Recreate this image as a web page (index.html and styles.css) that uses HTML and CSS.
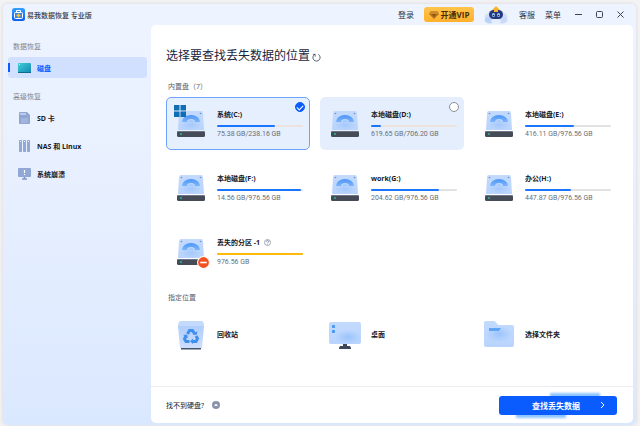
FILE: index.html
```html
<!DOCTYPE html>
<html lang="zh-CN">
<head>
    <meta charset="UTF-8">
    <meta name="viewport" content="width=device-width, initial-scale=1.0">
    <title>易我数据恢复 专业版</title>
    <link rel="stylesheet" href="styles.css">
</head>
<body>
    <!-- Iconos compartidos -->
    <svg class="sprite" aria-hidden="true">
        <defs>
            <linearGradient id="gBody" x1="0" y1="0" x2="0" y2="1">
                <stop offset="0" stop-color="#c3dafd"/>
                <stop offset="1" stop-color="#b9d4fd"/>
            </linearGradient>
            <linearGradient id="gArc" x1="0" y1="0" x2="0" y2="1">
                <stop offset="0" stop-color="#4b97f8"/>
                <stop offset="1" stop-color="#7db4fb"/>
            </linearGradient>
            <linearGradient id="gBin" x1="0" y1="0" x2="0" y2="1">
                <stop offset="0" stop-color="#a9cafc"/>
                <stop offset="1" stop-color="#cfdefc"/>
            </linearGradient>
            <linearGradient id="gLogo" x1="0" y1="0" x2="0" y2="1">
                <stop offset="0" stop-color="#35a0fb"/>
                <stop offset="1" stop-color="#0a5cf5"/>
            </linearGradient>
            <linearGradient id="gDisk" x1="0" y1="0" x2="1" y2="1">
                <stop offset="0" stop-color="#3fd0d8"/>
                <stop offset="1" stop-color="#1286b4"/>
            </linearGradient>
            <radialGradient id="gGlow">
                <stop offset="0" stop-color="#8dbcfb"/>
                <stop offset="1" stop-color="#8dbcfb" stop-opacity="0"/>
            </radialGradient>
        </defs>
        <symbol id="drive" viewBox="0 0 28 28">
            <path d="M4 1h20a2 2 0 0 1 2 2l1 17H1L2 3a2 2 0 0 1 2-2z" fill="url(#gBody)"/>
            <ellipse cx="14" cy="15" rx="11" ry="5" fill="url(#gGlow)" opacity=".5"/>
            <path d="M5 12a9 7 0 0 1 18 0h-5a4 3 0 0 0-8 0z" fill="url(#gArc)"/>
            <path d="M11.500 12a2.500 2 0 0 1 5 0z" fill="#a5cbfc"/>
            <circle cx="4.500" cy="3.500" r=".8" fill="#6d8fc4"/>
            <circle cx="23.500" cy="3.500" r=".8" fill="#6d8fc4"/>
            <rect x="0" y="21" width="28" height="6" rx="1.500" fill="#454b57"/>
            <path d="M0 22l1-1h26l1 1z" fill="#6b7585"/>
            <circle cx="4" cy="24" r=".9" fill="#22c7a0"/>
        </symbol>
    </svg>

    <div class="window">
        <header class="titlebar">
            <div class="brand">
                <svg class="logo" viewBox="0 0 13 13">
                    <rect width="13" height="13" rx="2.500" fill="url(#gLogo)"/>
                    <path d="M4.500 4V2.500h4V4" fill="none" stroke="#fff"/>
                    <rect x="2.500" y="4.500" width="8" height="6" rx="1" fill="#2f83f5" stroke="#fff"/>
                    <path d="M6.500 5.500v4M4.500 7.500h4" stroke="#ffc63a" stroke-width="1.400"/>
                </svg>
                <span>易我数据恢复 专业版</span>
            </div>
            <div class="tools">
                <button type="button" class="link">登录</button>
                <button type="button" class="vip">
                    <svg width="10" height="8" viewBox="0 0 10 8">
                        <path d="M2 0h6l2 3-5 5-5-5z" fill="#b4701a"/>
                        <path d="M2 0h6l2 3H0z" fill="#cf8a2c"/>
                        <path d="M3 3h4L5 6z" fill="#8c5312"/>
                    </svg>
                    <span>开通VIP</span>
                </button>
                <svg class="mascot" viewBox="0 0 25 18">
                    <ellipse cx="12" cy="11" rx="11.500" ry="5.500" fill="#cfe0fb"/>
                    <ellipse cx="6" cy="14" rx="5.500" ry="3.500" fill="#bcd3f8"/>
                    <ellipse cx="18" cy="14" rx="5.500" ry="3.500" fill="#c9dbf9"/>
                    <ellipse cx="12" cy="15" rx="5" ry="2.500" fill="#e4edfd"/>
                    <rect x="5" y="4" width="14" height="9" rx="4.500" fill="#26387f"/>
                    <path d="M12 0l4 4h-2v2h-4V4H8z" fill="#f7b32b"/>
                    <ellipse cx="9.500" cy="9" rx="1.500" ry="2" fill="#a3cdfb"/>
                    <ellipse cx="14.500" cy="9" rx="1.500" ry="2" fill="#a3cdfb"/>
                    <circle cx="9.500" cy="9.500" r=".8" fill="#1d2a66"/>
                    <circle cx="14.500" cy="9.500" r=".8" fill="#1d2a66"/>
                </svg>
                <button type="button" class="link">客服</button>
                <button type="button" class="link">菜单</button>
                <div class="controls">
                    <button type="button" aria-label="最小化"><svg viewBox="0 0 7 7"><path d="M0 3.500h7"/></svg></button>
                    <button type="button" aria-label="最大化"><svg viewBox="0 0 7 7"><rect x=".5" y=".5" width="6" height="6" rx="1"/></svg></button>
                    <button type="button" aria-label="关闭"><svg viewBox="0 0 7 7"><path d="M.5.5l6 6M6.500.5l-6 6"/></svg></button>
                </div>
            </div>
        </header>

        <div class="body">
            <nav class="sidebar">
                <p class="group">数据恢复</p>
                <a href="#disk" class="item active">
                    <svg viewBox="0 0 14 14">
                        <rect x="1" y="2" width="13" height="10" rx="1" fill="url(#gDisk)"/>
                        <path d="M1 11h13v1H1z" fill="#0c6b93"/>
                        <circle cx="2.500" cy="3.500" r=".6" fill="#c9fbf6"/>
                    </svg>
                    <span>磁盘</span>
                </a>
                <p class="group">高级恢复</p>
                <a href="#sd" class="item">
                    <svg viewBox="0 0 14 14">
                        <path d="M3 1h7l3 3v8a1 1 0 0 1-1 1H3a1 1 0 0 1-1-1V2a1 1 0 0 1 1-1z" fill="#8fa6d3"/>
                        <path d="M4 2v2M6 2v2M8 2v2" stroke="#e9f1ff"/>
                        <path d="M4 7h7v5H4z" fill="#a0b4dc"/>
                    </svg>
                    <span>SD 卡</span>
                </a>
                <a href="#nas" class="item">
                    <svg viewBox="0 0 14 14">
                        <rect x="2" y="1" width="3" height="12" rx=".7" fill="#91a8d5"/>
                        <rect x="6" y="1" width="3" height="12" rx=".7" fill="#91a8d5"/>
                        <rect x="10" y="1" width="3" height="12" rx=".7" fill="#91a8d5"/>
                        <path d="M3.500 2v1M7.500 2v1M11.500 2v1" stroke="#e9f1ff"/>
                    </svg>
                    <span>NAS 和 Linux</span>
                </a>
                <a href="#crash" class="item">
                    <svg viewBox="0 0 14 14">
                        <rect x="1" y="1" width="13" height="9" rx="1" fill="#91a8d5"/>
                        <path d="M7.500 3v3M7.500 7v1" stroke="#fff" stroke-width="1.200"/>
                        <path d="M5 12h5" stroke="#7f97c9" stroke-width="1.500"/>
                        <path d="M7.500 10v2" stroke="#7f97c9" stroke-width="1.500"/>
                    </svg>
                    <span>系统崩溃</span>
                </a>
            </nav>

            <main class="panel">
                <div class="content">
                    <div class="heading">
                        <h1>选择要查找丢失数据的位置</h1>
                        <button type="button" class="refresh" aria-label="刷新">
                            <svg viewBox="0 0 10 10"><path d="M3 1.500A4 4 0 1 0 7 1.500M1 1.500h2.500V4"/></svg>
                        </button>
                    </div>

                    <h2>内置盘（7）</h2>
                    <div class="grid">
                        <label class="card selected">
                            <span class="icon">
                                <svg class="drive"><use href="#drive"/></svg>
                                <svg class="win" viewBox="0 0 12 12"><path d="M0 0h5.500v5.500H0zM6.500 0H12v5.500H6.500zM0 6.500h5.500V12H0zM6.500 6.500H12V12H6.500z" fill="#0f6db4"/></svg>
                            </span>
                            <span class="info">
                                <b>系统(C:)</b>
                                <span class="bar"><i style="width: 68%"></i></span>
                                <small>75.38 GB/238.16 GB</small>
                            </span>
                            <input type="radio" name="disk" checked>
                        </label>
                        <label class="card hover">
                            <span class="icon"><svg class="drive"><use href="#drive"/></svg></span>
                            <span class="info">
                                <b>本地磁盘(D:)</b>
                                <span class="bar"><i style="width: 12%"></i></span>
                                <small>619.65 GB/706.20 GB</small>
                            </span>
                            <input type="radio" name="disk">
                        </label>
                        <label class="card">
                            <span class="icon"><svg class="drive"><use href="#drive"/></svg></span>
                            <span class="info">
                                <b>本地磁盘(E:)</b>
                                <span class="bar"><i style="width: 57%"></i></span>
                                <small>416.11 GB/976.56 GB</small>
                            </span>
                            <input type="radio" name="disk">
                        </label>
                        <label class="card">
                            <span class="icon"><svg class="drive"><use href="#drive"/></svg></span>
                            <span class="info">
                                <b>本地磁盘(F:)</b>
                                <span class="bar"><i style="width: 98%"></i></span>
                                <small>14.56 GB/976.56 GB</small>
                            </span>
                            <input type="radio" name="disk">
                        </label>
                        <label class="card">
                            <span class="icon"><svg class="drive"><use href="#drive"/></svg></span>
                            <span class="info">
                                <b>work(G:)</b>
                                <span class="bar"><i style="width: 79%"></i></span>
                                <small>204.62 GB/976.56 GB</small>
                            </span>
                            <input type="radio" name="disk">
                        </label>
                        <label class="card">
                            <span class="icon"><svg class="drive"><use href="#drive"/></svg></span>
                            <span class="info">
                                <b>办公(H:)</b>
                                <span class="bar"><i style="width: 54%"></i></span>
                                <small>447.87 GB/976.56 GB</small>
                            </span>
                            <input type="radio" name="disk">
                        </label>
                        <label class="card lost">
                            <span class="icon">
                                <svg class="drive"><use href="#drive"/></svg>
                                <svg class="minus" viewBox="0 0 12 12"><circle cx="6" cy="6" r="5.500" fill="#f4511e" stroke="#fff"/><path d="M3 6h6" stroke="#fff" stroke-width="1.500"/></svg>
                            </span>
                            <span class="info">
                                <b>丢失的分区 -1
                                    <svg class="help" viewBox="0 0 7 7"><circle cx="3.500" cy="3.500" r="3" fill="none" stroke="#7e8798" stroke-width=".7"/><path d="M2.300 2.700c0-1.500 2.400-1.500 2.400 0 0 .7-1.200.7-1.200 1.500M3.500 4.800v.7" fill="none" stroke="#5d6678" stroke-width=".7"/></svg>
                                </b>
                                <span class="bar"><i style="width: 100%"></i></span>
                                <small>976.56 GB</small>
                            </span>
                            <input type="radio" name="disk">
                        </label>
                    </div>

                    <h2 class="second">指定位置</h2>
                    <div class="grid">
                        <label class="card">
                            <span class="icon">
                                <svg class="place" viewBox="0 0 32 30">
                                    <path d="M4 2l2-1h20l2 1 1 4-2 22H5L3 6z" fill="url(#gBin)"/>
                                    <path d="M4 2l2-1h20l2 1 1 4H3z" fill="#c4dafd"/>
                                    <path d="M6 28h20v1.500H6z" fill="#46516a"/>
                                    <g fill="none" stroke="#3f8fee" stroke-width="3">
                                        <path d="M12.500 14l2-3.500h3l2 3"/>
                                        <path d="M21 16l1.500 2.500-1.500 3h-3.500"/>
                                        <path d="M14.500 21.500H11L9.500 19l1.500-3"/>
                                    </g>
                                    <path d="M17.500 14.500l4 .5 1-4zM18 18.500v5.500l-3-2.800zM8 15l4-.5 1 3.500z" fill="#3f8fee"/>
                                </svg>
                            </span>
                            <span class="info"><b>回收站</b></span>
                            <input type="radio" name="disk">
                        </label>
                        <label class="card">
                            <span class="icon">
                                <svg class="place" viewBox="0 0 32 30">
                                    <rect x="0" y="2" width="32" height="22" rx="2" fill="url(#gBody)"/>
                                    <ellipse cx="19" cy="17" rx="13" ry="7" fill="url(#gGlow)" opacity=".7"/>
                                    <rect x="3" y="5" width="3" height="3" rx=".7" fill="#4598f5"/>
                                    <rect x="3" y="10" width="3" height="3" rx=".7" fill="#4598f5"/>
                                    <path d="M14 24h4v2h3l1 2v1H10v-1l1-2h3z" fill="#3e4759"/>
                                </svg>
                            </span>
                            <span class="info"><b>桌面</b></span>
                            <input type="radio" name="disk">
                        </label>
                        <label class="card">
                            <span class="icon">
                                <svg class="place" viewBox="0 0 32 30">
                                    <path d="M1 3a2 2 0 0 1 2-2h8c2 0 3 4 5 4h13a2 2 0 0 1 2 2v18a2 2 0 0 1-2 2H3a2 2 0 0 1-2-2z" fill="url(#gBody)"/>
                                    <ellipse cx="16" cy="14" rx="13" ry="8" fill="url(#gGlow)" opacity=".7"/>
                                    <path d="M6 8h12l-2 3H6z" fill="#5ea5f8"/>
                                </svg>
                            </span>
                            <span class="info"><b>选择文件夹</b></span>
                            <input type="radio" name="disk">
                        </label>
                    </div>
                </div>

                <footer>
                    <a href="#help" class="nodisk">
                        <span>找不到硬盘?</span>
                        <svg viewBox="0 0 8 8"><circle cx="4" cy="4" r="4" fill="#8a93a9"/><path d="M2.500 4.500L4 3l1.500 1.500z" fill="#fff" stroke="#fff" stroke-width=".7"/></svg>
                    </a>
                    <div class="action">
                        <button type="button" class="scan">
                            <span>查找丢失数据</span>
                            <svg viewBox="0 0 5 8"><path d="M1 1l3 3-3 3"/></svg>
                        </button>
                    </div>
                </footer>
            </main>
        </div>
    </div>
</body>
</html>
```

FILE: styles.css
```css
* {
    box-sizing: border-box;
}

body {
    font-family: 'Open Sans', 'Noto Sans CJK SC', sans-serif;
    font-size: 7px;
    color: #15181f;
    background: #f3f3f5;
    margin: 0;
    padding: 4px 4px 1px 3px;
    display: flex;
    min-height: 100vh;
}

button {
    font-family: inherit;
    color: inherit;
    background: none;
    border: none;
    padding: 0;
    cursor: pointer;
}

a {
    color: inherit;
    text-decoration: none;
}

svg {
    display: block;
    flex: none;
}

.sprite {
    position: absolute;
    width: 0;
    height: 0;
}

.window {
    flex: 1;
    display: flex;
    flex-direction: column;
    border-radius: 5px;
    background: linear-gradient(180deg, #eef4ff 0%, #e8f0ff 40%, #dae8ff 100%);
    box-shadow: 0 0 4px rgba(0, 0, 0, 0.12);
}

/* Barra superior */
.titlebar {
    display: flex;
    justify-content: space-between;
    align-items: center;
    height: 21px;
    padding: 0 12px 0 9px;
}

.brand,
.tools,
.controls {
    display: flex;
    align-items: center;
}

.brand {
    gap: 2px;
    font-weight: 500;
    color: #343b4d;
}

.logo {
    width: 13px;
    height: 13px;
}

.tools {
    gap: 10px;
}

.link {
    font-size: 8px;
    color: #2c3345;
}

.vip {
    display: flex;
    align-items: center;
    justify-content: center;
    gap: 2px;
    width: 50px;
    height: 15px;
    font-size: 8px;
    font-weight: 700;
    color: #4d2c05;
    border-radius: 3px;
    background: linear-gradient(180deg, #ffc44c, #ffb02b);
}

.mascot {
    width: 25px;
    height: 18px;
}

.controls {
    gap: 14px;
    padding-left: 4px;
}

.controls svg {
    width: 7px;
    height: 7px;
    fill: none;
    stroke: #3c4353;
}

.body {
    flex: 1;
    display: flex;
    padding: 0 3px 2px 0;
}

/* Menu lateral */
.sidebar {
    width: 148px;
    flex: none;
    padding: 16px 4px 0 5px;
}

.group {
    margin: 13px 0 4px;
    padding-left: 5px;
    line-height: 12px;
    color: #80858f;
}

.group:first-child {
    margin-top: 0;
}

.item {
    position: relative;
    display: flex;
    align-items: center;
    gap: 6px;
    height: 21px;
    margin-bottom: 7px;
    padding-left: 9px;
    font-weight: 700;
    border-radius: 3px;
}

.item svg {
    width: 14px;
    height: 14px;
}

.item.active {
    color: #0b5cff;
    background: #d1e0ff;
}

.item.active::before {
    content: '';
    position: absolute;
    left: 0;
    top: 6px;
    width: 2px;
    height: 9px;
    background: #0b5cff;
}

/* Panel principal */
.panel {
    flex: 1;
    min-width: 0;
    display: flex;
    flex-direction: column;
    background: #ffffff;
    border-radius: 5px;
}

.content {
    flex: 1;
    padding: 21px 15px 0;
}

.heading {
    display: flex;
    align-items: center;
    gap: 2px;
}

h1 {
    margin: 0;
    font-size: 12px;
    font-weight: 400;
    line-height: 20px;
    color: #1c2440;
}

.refresh {
    padding-top: 2px;
}

.refresh svg {
    width: 9px;
    height: 9px;
    fill: none;
    stroke: #4a5266;
}

h2 {
    margin: 15px 0 4px;
    padding-left: 2px;
    font-size: 7px;
    font-weight: 400;
    line-height: 12px;
    color: #5a5f6b;
}

h2.second {
    margin-top: 14px;
}

.grid {
    display: grid;
    grid-template-columns: repeat(3, 1fr);
    gap: 11px 10px;
}

.card {
    position: relative;
    display: flex;
    align-items: center;
    gap: 10px;
    height: 53px;
    padding: 0 6px 0 8px;
    border: 1px solid transparent;
    border-radius: 5px;
    cursor: pointer;
}

.card.hover {
    background: #e5eefc;
}

.card.selected {
    background: #e5effd;
    border-color: #6ea4fb;
}

.card input {
    appearance: none;
    position: absolute;
    top: 4px;
    right: 4px;
    width: 10px;
    height: 10px;
    margin: 0;
    border: 1px solid #8a8f99;
    border-radius: 50%;
    background: #ffffff;
    opacity: 0;
}

.card.hover input,
.card.selected input {
    opacity: 1;
}

.card input:checked {
    border-color: #0b5cff;
    background: #0b5cff;
}

.card.selected::after {
    content: '';
    position: absolute;
    top: 7px;
    right: 6px;
    width: 5px;
    height: 3px;
    border-left: 1px solid #ffffff;
    border-bottom: 1px solid #ffffff;
    transform: rotate(-45deg);
}

.icon {
    position: relative;
    display: flex;
    justify-content: center;
    width: 32px;
    flex: none;
}

.drive {
    width: 28px;
    height: 28px;
}

.place {
    width: 32px;
    height: 30px;
}

.win {
    position: absolute;
    left: -1px;
    top: -5px;
    width: 12px;
    height: 12px;
}

.minus {
    position: absolute;
    right: -3px;
    bottom: -3px;
    width: 13px;
    height: 13px;
}

.info {
    flex: 1;
    min-width: 0;
}

.info b {
    display: flex;
    align-items: center;
    gap: 4px;
    line-height: 12px;
    font-weight: 700;
}

.help {
    width: 7px;
    height: 7px;
}

.bar {
    display: block;
    height: 2px;
    margin: 4px 0 2px;
    border-radius: 1px;
    background: #e2e2e4;
}

.hover .bar,
.selected .bar {
    background: #ece3dd;
}

.bar i {
    display: block;
    height: 100%;
    border-radius: 1px;
    background: #1a75ff;
}

.lost .bar i {
    background: #ffba0a;
}

.info small {
    display: block;
    font-family: Roboto, 'Open Sans', sans-serif;
    font-size: 7px;
    line-height: 10px;
    color: #6a6e78;
}

/* Pie */
footer {
    display: flex;
    justify-content: space-between;
    align-items: center;
    height: 37px;
    padding: 0 16px 0 15px;
    border-top: 1px solid #ececf0;
}

.nodisk {
    display: flex;
    align-items: center;
    gap: 8px;
}

.nodisk svg {
    width: 8px;
    height: 8px;
}

.action {
    position: relative;
    z-index: 0;
}

.action::before,
.action::after {
    content: '';
    position: absolute;
    z-index: -1;
    width: 50px;
    height: 8px;
    background: #8ec5ff;
    filter: blur(1px);
}

.action::before {
    top: -3px;
    right: 17px;
}

.action::after {
    bottom: -3px;
    left: 17px;
}

.scan {
    display: flex;
    align-items: center;
    justify-content: flex-end;
    gap: 20px;
    width: 118px;
    height: 19px;
    padding-right: 12px;
    font-size: 8px;
    font-weight: 700;
    color: #ffffff;
    background: #0b5cff;
    border-radius: 3px;
}

.scan svg {
    width: 5px;
    height: 8px;
    fill: none;
    stroke: #ffffff;
}
```
